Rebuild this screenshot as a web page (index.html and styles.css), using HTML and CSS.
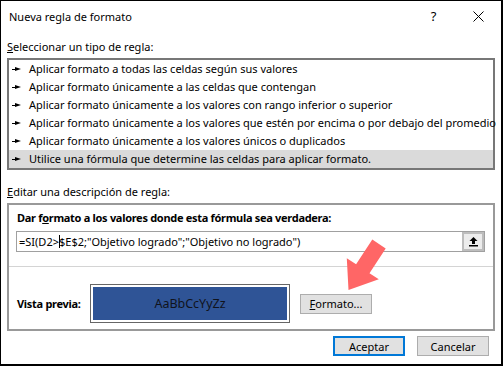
FILE: index.html
```html
<!DOCTYPE html>
<html lang="es">
<head>
    <meta charset="UTF-8">
    <title>Nueva regla de formato</title>
    <link rel="stylesheet" href="styles.css">
</head>
<body>
    <div class="dialog">
        <div class="titlebar">
            <span class="title">Nueva regla de formato</span>
            <span class="caption-btn help">?</span>
            <span class="caption-btn close">
                <svg width="11" height="11" viewBox="0 0 11 11"><path d="M0.5 0.5 L10.5 10.5 M10.5 0.5 L0.5 10.5" stroke="#000" stroke-width="1" fill="none"/></svg>
            </span>
        </div>

        <div class="content">
            <div class="label"><u>S</u>eleccionar un tipo de regla:</div>
            <ul class="rules">
                <li><span class="bullet"></span>Aplicar formato a todas las celdas según sus valores</li>
                <li><span class="bullet"></span>Aplicar formato únicamente a las celdas que contengan</li>
                <li><span class="bullet"></span>Aplicar formato únicamente a los valores con rango inferior o superior</li>
                <li><span class="bullet"></span>Aplicar formato únicamente a los valores que estén por encima o por debajo del promedio</li>
                <li><span class="bullet"></span>Aplicar formato únicamente a los valores únicos o duplicados</li>
                <li class="selected"><span class="bullet"></span>Utilice una fórmula que determine las celdas para aplicar formato.</li>
            </ul>

            <div class="label label-edit"><u>E</u>ditar una descripción de regla:</div>
            <div class="group">
                <div class="group-title">Dar f<u>o</u>rmato a los valores donde esta fórmula sea verdadera:</div>
                <div class="formula">
                    <span class="formula-text">=SI(D2&gt;<span class="caret"></span>$E$2;"Objetivo logrado";"Objetivo no logrado")</span>
                    <span class="collapse">
                        <svg width="11" height="11" viewBox="0 0 11 11"><path d="M5.5 1 L1.5 5 H4 V8 H7 V5 H9.5 Z" fill="#000"/><rect x="1" y="9" width="9" height="1.5" fill="#000"/></svg>
                    </span>
                </div>
                <div class="separator"></div>
                <div class="preview-row">
                    <span class="preview-label">Vista previa:</span>
                    <div class="preview"><div class="preview-fill">AaBbCcYyZz</div></div>
                    <button class="btn format-btn"><u>F</u>ormato...</button>
                </div>
            </div>

            <div class="actions">
                <button class="btn default">Aceptar</button>
                <button class="btn">Cancelar</button>
            </div>
        </div>

        <!-- callout pointing at the format button -->
        <svg class="pointer" width="56" height="64" viewBox="339 233 56 64">
            <polygon points="372.3,239.6 385.7,248.4 369.5,273.2 378.8,279.3 348.5,290 346.8,258.2 356.1,264.3" fill="#ff6666"/>
        </svg>
    </div>
</body>
</html>
```

FILE: styles.css
```css
body {
    margin: 0;
    font-family: 'Segoe UI', 'Noto Sans', 'Open Sans', sans-serif;
    font-size: 11px;
    color: #000;
    background: #fff;
}

.dialog {
    position: relative;
    width: 503px;
    height: 366px;
    box-sizing: border-box;
    border-style: solid;
    border-color: #000;
    border-width: 1px 2px 2px 1px;
    background: #fff;
}

.titlebar {
    display: flex;
    align-items: center;
    height: 30px;
}

.title {
    padding-left: 8px;
    flex: 1;
}

.caption-btn {
    width: 45px;
    height: 30px;
    display: flex;
    align-items: center;
    justify-content: center;
}

.help {
    font-size: 13px;
}

.content {
    padding: 0 6px;
}

.label {
    margin-top: 8px;
    margin-bottom: 3px;
    line-height: 16px;
}

.label-edit {
    margin-top: 14px;
}

.rules {
    list-style: none;
    margin: 0;
    padding: 0;
    border: 2px solid #777;
}

.rules li {
    height: 18px;
    line-height: 18px;
    padding-left: 3px;
    white-space: nowrap;
    display: flex;
    align-items: center;
}

.rules li.selected {
    background: #dadada;
}

/* small arrow marker in front of each rule */
.bullet {
    position: relative;
    flex-shrink: 0;
    width: 9px;
    height: 5px;
    margin-right: 8px;
}

.bullet::before {
    content: '';
    position: absolute;
    left: 0;
    top: 2px;
    width: 5px;
    height: 1px;
    background: #000;
}

.bullet::after {
    content: '';
    position: absolute;
    left: 3px;
    top: 0;
    border-left: 6px solid #000;
    border-top: 2.5px solid transparent;
    border-bottom: 2.5px solid transparent;
}

.group {
    border: 2px solid #999;
    padding: 5px 8px 6px 7px;
}

.group-title {
    font-weight: bold;
    line-height: 16px;
    padding-left: 1px;
    letter-spacing: -0.3px;
    white-space: nowrap;
}

.formula {
    display: flex;
    align-items: center;
    height: 21px;
    box-sizing: border-box;
    margin-top: 5px;
    border: 1px solid #a0a0a0;
}

.formula-text {
    flex: 1;
    padding-left: 2px;
    white-space: nowrap;
}

.caret {
    display: inline-block;
    width: 1px;
    height: 13px;
    background: #000;
    vertical-align: -2px;
    margin-right: -1px;
}

.collapse {
    width: 22px;
    height: 19px;
    box-sizing: border-box;
    border: 2px solid #bdbdbd;
    background: #ececec;
    display: flex;
    align-items: center;
    justify-content: center;
}

.separator {
    height: 1px;
    background: #d4d4d4;
    margin: 14px -8px 0 -7px;
}

.preview-row {
    display: flex;
    align-items: center;
    margin-top: 17px;
}

.preview-label {
    width: 73px;
    flex-shrink: 0;
    padding-left: 1px;
    font-weight: bold;
    letter-spacing: -0.3px;
    white-space: nowrap;
}

.preview {
    width: 200px;
    height: 39px;
    flex-shrink: 0;
    box-sizing: border-box;
    border: 1px solid #666;
    padding: 2px;
}

.preview-fill {
    height: 100%;
    background: #2f5496;
    color: #10131c;
    font-size: 12.5px;
    display: flex;
    align-items: center;
    justify-content: center;
}

.btn {
    font-family: inherit;
    font-size: 11px;
    color: #000;
    width: 72px;
    height: 20px;
    padding: 0;
    box-sizing: border-box;
    background: #e1e1e1;
    border: 1px solid #adadad;
}

.format-btn {
    margin-left: 10px;
}

.actions {
    display: flex;
    justify-content: flex-end;
    gap: 12px;
    margin-top: 5px;
    padding-right: 6px;
}

.btn.default {
    border: 2px solid #0078d7;
}

.pointer {
    position: absolute;
    left: 338px;
    top: 232px;
}
```
